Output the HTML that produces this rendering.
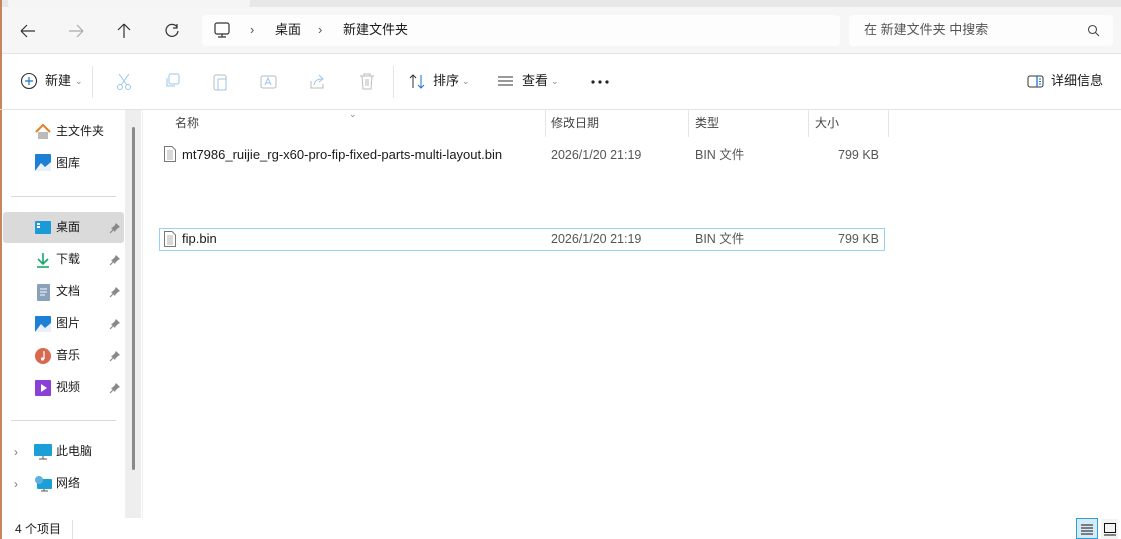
<!DOCTYPE html><html><head><meta charset="utf-8"><style>
*{margin:0;padding:0;box-sizing:border-box}
body{width:1121px;height:539px;overflow:hidden;background:#fff;font-family:"Liberation Sans","Noto Sans CJK SC",sans-serif;font-size:12px;color:#1a1a1a;position:relative}
.a{position:absolute}
.t{white-space:nowrap;line-height:16px}
svg{position:absolute}
</style></head><body>
<div class="a" style="left:0;top:0;width:1121px;height:8px;background:#e8e8e8"></div>
<div class="a" style="left:8px;top:0;width:242px;height:8px;background:#f5f5f5;border-radius:0 0 4px 4px"></div>
<div class="a" style="left:0;top:7px;width:1121px;height:47px;background:#f6f6f6;border-bottom:1px solid #e3e3e3"></div>
<div class="a" style="left:0;top:0;width:2px;height:539px;background:#c8845a"></div>
<svg style="left:18px;top:22px" width="20" height="18"><path d="M3 9H17M3 9L9 3M3 9L9 15" stroke="#333" stroke-width="1.2" fill="none"/></svg>
<svg style="left:66px;top:22px" width="20" height="18"><path d="M3 9H17M17 9L11 3M17 9L11 15" stroke="#aaa" stroke-width="1.2" fill="none"/></svg>
<svg style="left:114px;top:21px" width="20" height="20"><path d="M10 3V17M10 3L4 9M10 3L16 9" stroke="#333" stroke-width="1.2" fill="none"/></svg>
<svg style="left:162px;top:21px" width="20" height="20"><path d="M15 6A6 6 0 1 0 16 10M15 3V7H11" stroke="#333" stroke-width="1.2" fill="none"/></svg>
<div class="a" style="left:202px;top:15px;width:638px;height:31px;background:#fdfdfd;border-radius:4px"></div>
<svg style="left:213px;top:21px" width="20" height="20"><rect x="2" y="2" width="14" height="11" rx="2" stroke="#333" stroke-width="1.2" fill="none"/><path d="M9 13V16M5 16H13" stroke="#333" stroke-width="1.2"/></svg>
<div class="a t" style="left:250px;top:22px;font-size:13px;color:#555">›</div>
<div class="a t" style="left:275px;top:22px;font-size:13px">桌面</div>
<div class="a t" style="left:318px;top:22px;font-size:13px;color:#555">›</div>
<div class="a t" style="left:343px;top:22px;font-size:13px">新建文件夹</div>
<div class="a" style="left:849px;top:15px;width:264px;height:31px;background:#fdfdfd;border-radius:4px"></div>
<div class="a t" style="left:864px;top:22px;font-size:13px;color:#555">在 新建文件夹 中搜索</div>
<svg style="left:1086px;top:23px" width="16" height="16"><circle cx="6.5" cy="6.5" r="4" stroke="#444" fill="none" stroke-width="1.1"/><path d="M9.5 9.5L13 13" stroke="#444" stroke-width="1.1"/></svg>
<div class="a" style="left:0;top:109px;width:1121px;height:1px;background:#e3e3e3"></div>
<svg style="left:20px;top:72px" width="20" height="20"><circle cx="9" cy="9" r="7.5" stroke="#333" fill="none" stroke-width="1.1"/><path d="M9 5V13M5 9H13" stroke="#1a73c8" stroke-width="1.2"/></svg>
<div class="a t" style="left:45px;top:73px;font-size:13px">新建</div>
<div class="a t" style="left:75px;top:73px;font-size:9px;color:#888">⌄</div>
<div class="a" style="left:92px;top:66px;width:1px;height:32px;background:#e5e5e5"></div>
<svg style="left:115px;top:72px" width="20" height="20"><circle cx="5" cy="15" r="2.5" stroke="#9cc6ec" fill="none"/><circle cx="13" cy="15" r="2.5" stroke="#9cc6ec" fill="none"/><path d="M4 2L12 13M14 2L6 13" stroke="#9cc6ec"/></svg>
<svg style="left:163px;top:72px" width="20" height="20"><rect x="6" y="2" width="10" height="10" rx="2" stroke="#9cc6ec" fill="none"/><path d="M4 6V14H12" stroke="#9cc6ec" fill="none"/></svg>
<svg style="left:211px;top:72px" width="20" height="20"><rect x="3" y="3" width="12" height="15" rx="2" stroke="#bbb" fill="none"/><rect x="7" y="7" width="8" height="11" rx="1" stroke="#9cc6ec" fill="none"/></svg>
<svg style="left:259px;top:72px" width="20" height="20"><rect x="2" y="4" width="15" height="12" rx="2" stroke="#bbb" fill="none"/><path d="M6 13L9 6L12 13M7 11H11" stroke="#9cc6ec" fill="none"/></svg>
<svg style="left:308px;top:72px" width="20" height="20"><path d="M3 9V16H15V12" stroke="#bbb" fill="none"/><path d="M6 13C7 8 10 7 14 7M11 3L15 7L11 10" stroke="#9cc6ec" fill="none"/></svg>
<svg style="left:357px;top:72px" width="20" height="20"><path d="M3 4H17M7 4V2H13V4M5 4L6 17H14L15 4M9 7V14M11 7V14" stroke="#bbb" fill="none"/></svg>
<div class="a" style="left:393px;top:66px;width:1px;height:32px;background:#e5e5e5"></div>
<svg style="left:408px;top:73px" width="20" height="18"><path d="M5 15V2M2 5L5 2L8 5" stroke="#333" fill="none"/><path d="M13 2V15M10 12L13 15L16 12" stroke="#1a73c8" fill="none"/></svg>
<div class="a t" style="left:433px;top:73px;font-size:13px">排序</div>
<div class="a t" style="left:462px;top:73px;font-size:9px;color:#888">⌄</div>
<svg style="left:497px;top:75px" width="18" height="14"><path d="M1 2H16M1 6H16M1 10H16" stroke="#333"/></svg>
<div class="a t" style="left:522px;top:73px;font-size:13px">查看</div>
<div class="a t" style="left:551px;top:73px;font-size:9px;color:#888">⌄</div>
<svg style="left:590px;top:79px" width="20" height="6"><circle cx="3" cy="3" r="1.6" fill="#222"/><circle cx="10" cy="3" r="1.6" fill="#222"/><circle cx="17" cy="3" r="1.6" fill="#222"/></svg>
<svg style="left:1027px;top:75px" width="18" height="14"><rect x="1" y="1" width="15" height="11" rx="2" stroke="#333" fill="none"/><path d="M10 1V12" stroke="#1a73c8" stroke-width="1.3"/><path d="M12 4H14M12 6.5H14M12 9H14" stroke="#1a73c8"/></svg>
<div class="a t" style="left:1051px;top:73px;font-size:13px">详细信息</div>
<div class="a" style="left:125px;top:110px;width:16px;height:408px;background:#eeeeee"></div>
<div class="a" style="left:132px;top:127px;width:3px;height:343px;background:#8a8a8a;border-radius:2px"></div>
<div class="a" style="left:142px;top:110px;width:1px;height:408px;background:#f0f0f0"></div>
<svg style="left:34px;top:123px" width="18" height="18"><path d="M2 9L9 2L16 9" stroke="#e67e22" stroke-width="2" fill="none"/><rect x="4" y="9" width="10" height="7" fill="#bbb"/></svg>
<div class="a t" style="left:56px;top:123px">主文件夹</div>
<svg style="left:35px;top:154px" width="16" height="17"><rect x="0" y="0" width="16" height="17" rx="1" fill="#1e7fd6"/><path d="M0 17L6 9L10 13L16 8V17Z" fill="#e8f1fb"/></svg>
<div class="a t" style="left:56px;top:155px">图库</div>
<div class="a" style="left:11px;top:196px;width:105px;height:1px;background:#d8d8d8"></div>
<div class="a" style="left:3px;top:212px;width:121px;height:31px;background:#dadada;border-radius:3px"></div>
<svg style="left:35px;top:221px" width="16" height="13"><rect width="16" height="13" rx="1" fill="#1a9ad6"/><rect x="2" y="2" width="3" height="2" fill="#fff"/><rect x="2" y="5" width="3" height="2" fill="#fff"/></svg>
<div class="a t" style="left:56px;top:219px">桌面</div>
<svg style="left:35px;top:252px" width="16" height="17"><path d="M8 1V12M3 7L8 12L13 7" stroke="#1aa86a" stroke-width="1.6" fill="none"/><path d="M2 15H14" stroke="#1aa86a" stroke-width="1.6"/></svg>
<div class="a t" style="left:56px;top:251px">下载</div>
<svg style="left:37px;top:284px" width="13" height="17"><rect width="13" height="17" rx="1" fill="#8aa0bb"/><path d="M3 5H10M3 8H10M3 11H8" stroke="#fff"/></svg>
<div class="a t" style="left:56px;top:283px">文档</div>
<svg style="left:35px;top:316px" width="16" height="16"><rect width="16" height="16" rx="1" fill="#1e7fd6"/><path d="M0 16L6 8L10 12L16 7V16Z" fill="#e8f1fb"/></svg>
<div class="a t" style="left:56px;top:315px">图片</div>
<svg style="left:35px;top:348px" width="16" height="16"><circle cx="8" cy="8" r="8" fill="#d9684e"/><path d="M9 3V11" stroke="#fff" stroke-width="1.3"/><circle cx="7.5" cy="11" r="1.6" fill="#fff"/></svg>
<div class="a t" style="left:56px;top:347px">音乐</div>
<svg style="left:35px;top:380px" width="16" height="16"><rect width="16" height="16" rx="1" fill="#8a3fd6"/><path d="M6 4V12L12 8Z" fill="#fff"/></svg>
<div class="a t" style="left:56px;top:379px">视频</div>
<svg style="left:109px;top:222px" width="12" height="12"><path d="M7 1L11 5L9 6L6.5 8.5L6 10L2 6L3.5 5.5L6 3Z" fill="#888"/><path d="M4 8L1 11" stroke="#888" stroke-width="1.2"/></svg>
<svg style="left:109px;top:254px" width="12" height="12"><path d="M7 1L11 5L9 6L6.5 8.5L6 10L2 6L3.5 5.5L6 3Z" fill="#888"/><path d="M4 8L1 11" stroke="#888" stroke-width="1.2"/></svg>
<svg style="left:109px;top:286px" width="12" height="12"><path d="M7 1L11 5L9 6L6.5 8.5L6 10L2 6L3.5 5.5L6 3Z" fill="#888"/><path d="M4 8L1 11" stroke="#888" stroke-width="1.2"/></svg>
<svg style="left:109px;top:318px" width="12" height="12"><path d="M7 1L11 5L9 6L6.5 8.5L6 10L2 6L3.5 5.5L6 3Z" fill="#888"/><path d="M4 8L1 11" stroke="#888" stroke-width="1.2"/></svg>
<svg style="left:109px;top:350px" width="12" height="12"><path d="M7 1L11 5L9 6L6.5 8.5L6 10L2 6L3.5 5.5L6 3Z" fill="#888"/><path d="M4 8L1 11" stroke="#888" stroke-width="1.2"/></svg>
<svg style="left:109px;top:382px" width="12" height="12"><path d="M7 1L11 5L9 6L6.5 8.5L6 10L2 6L3.5 5.5L6 3Z" fill="#888"/><path d="M4 8L1 11" stroke="#888" stroke-width="1.2"/></svg>
<div class="a" style="left:11px;top:420px;width:105px;height:1px;background:#d8d8d8"></div>
<div class="a t" style="left:14px;top:444px;color:#777">›</div>
<svg style="left:34px;top:444px" width="18" height="16"><rect width="18" height="12" rx="1" fill="#1aa0d6"/><path d="M9 12V15M5 15H13" stroke="#555"/></svg>
<div class="a t" style="left:56px;top:443px">此电脑</div>
<div class="a t" style="left:14px;top:476px;color:#777">›</div>
<svg style="left:34px;top:475px" width="18" height="17"><rect x="3" y="4" width="15" height="10" rx="1" fill="#1aa0d6"/><circle cx="5" cy="5" r="4" fill="#5fb0e0"/><path d="M10 14V16M7 16H14" stroke="#555"/></svg>
<div class="a t" style="left:56px;top:475px">网络</div>
<div class="a t" style="left:349px;top:106px;font-size:9px;color:#888">⌄</div>
<div class="a t" style="left:175px;top:115px;color:#444">名称</div>
<div class="a" style="left:545px;top:110px;width:1px;height:27px;background:#e5e5e5"></div>
<div class="a t" style="left:551px;top:115px;color:#444">修改日期</div>
<div class="a" style="left:688px;top:110px;width:1px;height:27px;background:#e5e5e5"></div>
<div class="a t" style="left:695px;top:115px;color:#444">类型</div>
<div class="a" style="left:808px;top:110px;width:1px;height:27px;background:#e5e5e5"></div>
<div class="a t" style="left:815px;top:115px;color:#444">大小</div>
<div class="a" style="left:888px;top:110px;width:1px;height:27px;background:#e5e5e5"></div>
<svg style="left:164px;top:146px" width="12" height="16"><path d="M.5 .5H8L11.5 4V15.5H.5Z" stroke="#777" fill="#fff"/><path d="M3 5H9M3 7H9M3 9H9M3 11H9M3 13H9" stroke="#999" stroke-width=".8"/></svg>
<div class="a t" style="left:182px;top:147px;font-size:13px">mt7986_ruijie_rg-x60-pro-fip-fixed-parts-multi-layout.bin</div>
<div class="a t" style="left:551px;top:147px;color:#555;font-size:12.5px">2026/1/20 21:19</div>
<div class="a t" style="left:695px;top:147px;color:#555;font-size:12.5px">BIN 文件</div>
<div class="a t" style="left:838px;top:147px;color:#555;font-size:12.5px">799 KB</div>
<div class="a" style="left:159px;top:228px;width:726px;height:23px;border:1px solid #99d1f5"></div>
<svg style="left:164px;top:231px" width="12" height="16"><path d="M.5 .5H8L11.5 4V15.5H.5Z" stroke="#777" fill="#fff"/><path d="M3 5H9M3 7H9M3 9H9M3 11H9M3 13H9" stroke="#999" stroke-width=".8"/></svg>
<div class="a t" style="left:182px;top:231px;font-size:13px">fip.bin</div>
<div class="a t" style="left:551px;top:231px;color:#555;font-size:12.5px">2026/1/20 21:19</div>
<div class="a t" style="left:695px;top:231px;color:#555;font-size:12.5px">BIN 文件</div>
<div class="a t" style="left:838px;top:231px;color:#555;font-size:12.5px">799 KB</div>
<div class="a t" style="left:15px;top:521px">4 个项目</div>
<div class="a" style="left:72px;top:520px;width:1px;height:19px;background:#e0e0e0"></div>
<div class="a" style="left:1076px;top:518px;width:22px;height:21px;background:#d6eaf8;border:1px solid #2a9fe0"></div>
<svg style="left:1080px;top:523px" width="14" height="14"><path d="M1 2H13M1 5H13M1 8H13M1 11H13" stroke="#111"/></svg>
<div class="a" style="left:1101px;top:519px;width:17px;height:20px;background:#f3f3f3"></div>
<svg style="left:1103px;top:522px" width="14" height="14"><rect x="1.5" y="1.5" width="11" height="9" stroke="#111" fill="none"/><path d="M1 13H13" stroke="#111"/></svg>
</body></html>
